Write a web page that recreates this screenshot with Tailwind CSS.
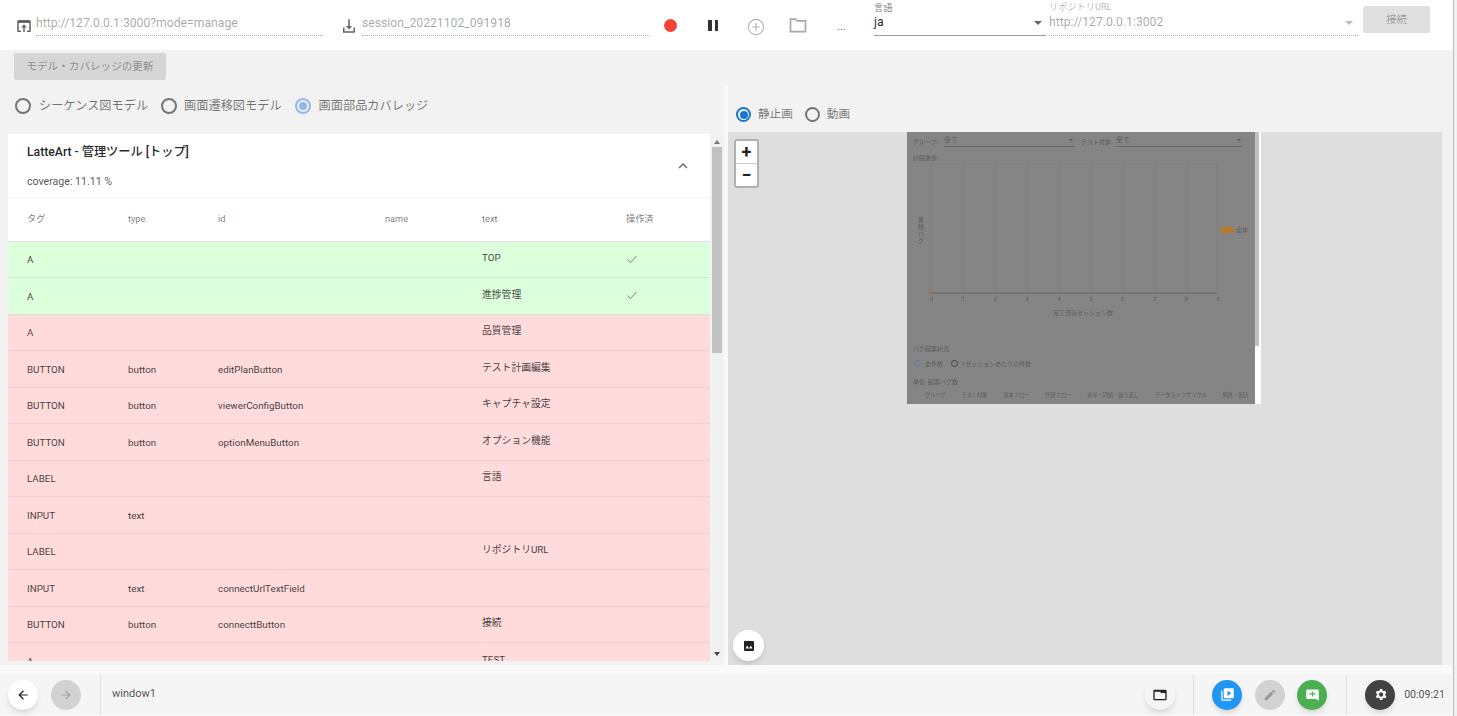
<!DOCTYPE html>
<html lang="ja">
<head>
  <meta charset="UTF-8">
  <title>LatteArt</title>
  <script src="https://cdn.jsdelivr.net/npm/@tailwindcss/browser@4"></script>
</head>
<body class="h-[716px] w-[1457px] overflow-hidden bg-[#f0f0f0] font-['Roboto','Noto_Sans_CJK_JP',sans-serif] text-[#000000de]">
  <div class="flex h-[716px] w-[1454px] flex-col border-r border-[#bdbdbd] bg-[#f2f2f2]">

    <!-- top toolbar -->
    <header class="flex h-[50px] shrink-0 items-start bg-white">
      <svg class="mt-[17px] ml-[15px] h-[18px] w-[18px] shrink-0" viewBox="0 0 24 24" fill="#666"><path d="M19 4H5a2 2 0 0 0-2 2v14h5v-2H5V8h14v10h-3v2h5V6a2 2 0 0 0-2-2zM12 10l-4 4h3v6h2v-6h3z"/></svg>
      <div class="mt-[14px] ml-[3px] h-[22px] w-[287px] border-b border-dotted border-[#aaa] pt-px text-[12.2px] leading-[17px] text-[#0000005c]">http://127.0.0.1:3000?mode=manage</div>
      <svg class="mt-[17px] ml-[17px] h-[18px] w-[18px] shrink-0" viewBox="0 0 24 24" fill="#666"><path d="M13 3h-2v9H8l4 4.500L16 12h-3zM4 14v7h16v-7h-2v5H6v-5z"/></svg>
      <div class="mt-[14px] ml-[4px] h-[22px] w-[288px] border-b border-dotted border-[#aaa] pt-px text-[12.2px] leading-[17px] text-[#0000005c]">session_20221102_091918</div>
      <div class="mt-[19px] ml-[14px] h-[13px] w-[13px] shrink-0 rounded-full bg-[#f44336]"></div>
      <div class="mt-[20px] ml-[31px] flex h-[11px] w-[10px] shrink-0 justify-between">
        <span class="w-[3.5px] bg-[#333]"></span><span class="w-[3.5px] bg-[#333]"></span>
      </div>
      <div class="mt-[18px] ml-[24px] h-[22px] w-[28px] shrink-0 px-[5px]">
        <svg class="h-[18px] w-[18px]" viewBox="0 0 18 18" fill="none" stroke="#b5b5b5" stroke-width="1.2"><circle cx="9" cy="9" r="7.6"/><path d="M9 5v8M5 9h8"/></svg>
      </div>
      <svg class="mt-[15px] ml-[18px] h-[20px] w-[20px] shrink-0" viewBox="0 0 24 24" fill="none" stroke="#a8a8a8" stroke-width="2"><path d="M3 20V5h6l2 2h10v13z"/></svg>
      <div class="mt-[19px] ml-[29px] w-[12px] shrink-0 text-[11px] leading-[16px] text-[#666]">...</div>
      <div class="relative ml-[25px] h-[36px] w-[172px] shrink-0 border-b border-[#9a9a9a]">
        <div class="pt-px text-[9.2px] leading-[13px] text-[#0000008a]">言語</div>
        <div class="text-[12.2px] leading-[17px]">ja</div>
        <div class="absolute top-[21px] right-[4px] h-0 w-0 border-x-[4px] border-t-[4px] border-x-transparent border-t-[#666]"></div>
      </div>
      <div class="relative ml-[3px] h-[36px] w-[309px] shrink-0 border-b border-dotted border-[#aaa]">
        <div class="text-[9.2px] leading-[13px] text-[#00000052]">リポジトリURL</div>
        <div class="pt-px text-[12.2px] leading-[17px] text-[#0000005c]">http://127.0.0.1:3002</div>
        <div class="absolute top-[21px] right-[5px] h-0 w-0 border-x-[4px] border-t-[4px] border-x-transparent border-t-[#bbb]"></div>
      </div>
      <div class="mt-[6px] ml-[5px] flex h-[27px] w-[67px] shrink-0 items-center justify-center rounded-[2px] bg-[#dfdfdf] pt-px text-[10.6px] text-[#00000052]">接続</div>
    </header>

    <!-- main -->
    <main class="flex min-h-0 flex-1">
      <section class="flex w-[724px] shrink-0 flex-col">
        <div class="mt-[3px] ml-[14px] flex h-[27px] w-[152px] items-center justify-center rounded-[2px] bg-[#d6d6d6] pt-px text-[10.6px] text-[#00000061]">モデル・カバレッジの更新</div>
        <div class="mt-[14px] ml-[15px] flex h-[24px] items-center text-[12.2px] text-[#0000008a]">
          <span class="h-[16px] w-[16px] rounded-full border-2 border-[#757575]"></span>
          <span class="ml-[8px]">シーケンス図モデル</span>
          <span class="ml-[13px] h-[16px] w-[16px] rounded-full border-2 border-[#757575]"></span>
          <span class="ml-[7px]">画面遷移図モデル</span>
          <span class="ml-[13px] flex h-[16px] w-[16px] items-center justify-center rounded-full border-2 border-[#90b8ee]"><span class="h-[8px] w-[8px] rounded-full bg-[#90b8ee]"></span></span>
          <span class="ml-[8px]">画面部品カバレッジ</span>
        </div>
        <div class="mt-[16px] flex min-h-0">
          <div class="ml-[8px] h-[527px] w-[702px] overflow-hidden bg-white">
            <div class="relative h-[64px] border-b border-[#f4f4f4]">
              <div class="pt-[10px] pl-[19px] text-[12.2px] leading-[17px] font-medium">LatteArt - 管理ツール [トップ]</div>
              <div class="pt-[14px] pl-[19px] text-[10.6px] leading-[14px] text-[#000000b3]">coverage: 11.11 %</div>
              <svg class="absolute top-[24px] right-[19px] h-[16px] w-[16px]" viewBox="0 0 24 24" fill="none" stroke="#666" stroke-width="2"><path d="M6 15l6-6 6 6"/></svg>
            </div>
            <table class="w-full table-fixed border-collapse text-[9.8px]">
              <colgroup><col class="w-[102px]"><col class="w-[90px]"><col class="w-[167px]"><col class="w-[97px]"><col class="w-[144px]"><col></colgroup>
              <thead>
                <tr class="h-[43.3px] border-b border-[#e0e0e0] text-left text-[9.2px] text-[#0000008a]">
                  <th class="pb-px pl-[19px] font-normal">タグ</th><th class="pb-px pl-[18px] font-normal">type</th><th class="pb-px pl-[18px] font-normal">id</th><th class="pb-px pl-[18px] font-normal">name</th><th class="pb-px pl-[18px] font-normal">text</th><th class="pb-px pl-[18px] font-normal">操作済</th>
                </tr>
              </thead>
              <tbody class="text-[#000000bf] [&_td]:pt-[2px]">
                <tr class="h-[36.5px] border-b border-[#cfe8cf] bg-[#dcffdc]"><td class="pl-[19px]">A</td><td></td><td></td><td></td><td class="pb-[4px] pl-[18px]">TOP</td><td class="pb-[4px] pl-[18px]"><svg class="h-[12px] w-[12px]" viewBox="0 0 24 24" fill="none" stroke="#666" stroke-width="1.6"><path d="M3 13l6 6L21 6"/></svg></td></tr>
                <tr class="h-[36.5px] border-b border-[#cfe8cf] bg-[#dcffdc]"><td class="pl-[19px]">A</td><td></td><td></td><td></td><td class="pb-[4px] pl-[18px]">進捗管理</td><td class="pb-[4px] pl-[18px]"><svg class="h-[12px] w-[12px]" viewBox="0 0 24 24" fill="none" stroke="#666" stroke-width="1.6"><path d="M3 13l6 6L21 6"/></svg></td></tr>
                <tr class="h-[36.5px] border-b border-[#f0cfcf] bg-[#ffdbdb]"><td class="pl-[19px]">A</td><td></td><td></td><td></td><td class="pb-[4px] pl-[18px]">品質管理</td><td></td></tr>
                <tr class="h-[36.5px] border-b border-[#f0cfcf] bg-[#ffdbdb]"><td class="pl-[19px]">BUTTON</td><td class="pl-[18px]">button</td><td class="pl-[18px]">editPlanButton</td><td></td><td class="pb-[4px] pl-[18px]">テスト計画編集</td><td></td></tr>
                <tr class="h-[36.5px] border-b border-[#f0cfcf] bg-[#ffdbdb]"><td class="pl-[19px]">BUTTON</td><td class="pl-[18px]">button</td><td class="pl-[18px]">viewerConfigButton</td><td></td><td class="pb-[4px] pl-[18px]">キャプチャ設定</td><td></td></tr>
                <tr class="h-[36.5px] border-b border-[#f0cfcf] bg-[#ffdbdb]"><td class="pl-[19px]">BUTTON</td><td class="pl-[18px]">button</td><td class="pl-[18px]">optionMenuButton</td><td></td><td class="pb-[4px] pl-[18px]">オプション機能</td><td></td></tr>
                <tr class="h-[36.5px] border-b border-[#f0cfcf] bg-[#ffdbdb]"><td class="pl-[19px]">LABEL</td><td></td><td></td><td></td><td class="pb-[4px] pl-[18px]">言語</td><td></td></tr>
                <tr class="h-[36.5px] border-b border-[#f0cfcf] bg-[#ffdbdb]"><td class="pl-[19px]">INPUT</td><td class="pl-[18px]">text</td><td></td><td></td><td></td><td></td></tr>
                <tr class="h-[36.5px] border-b border-[#f0cfcf] bg-[#ffdbdb]"><td class="pl-[19px]">LABEL</td><td></td><td></td><td></td><td class="pb-[4px] pl-[18px]">リポジトリURL</td><td></td></tr>
                <tr class="h-[36.5px] border-b border-[#f0cfcf] bg-[#ffdbdb]"><td class="pl-[19px]">INPUT</td><td class="pl-[18px]">text</td><td class="pl-[18px]">connectUrlTextField</td><td></td><td></td><td></td></tr>
                <tr class="h-[36.5px] border-b border-[#f0cfcf] bg-[#ffdbdb]"><td class="pl-[19px]">BUTTON</td><td class="pl-[18px]">button</td><td class="pl-[18px]">connecttButton</td><td></td><td class="pb-[4px] pl-[18px]">接続</td><td></td></tr>
                <tr class="h-[36.5px] bg-[#ffdbdb]"><td class="pl-[19px]">A</td><td></td><td></td><td></td><td class="pb-[4px] pl-[18px]">TEST</td><td></td></tr>
              </tbody>
            </table>
          </div>
          <!-- list scrollbar -->
          <div class="ml-[2px] flex h-[527px] w-[10px] flex-col items-center bg-[#f1f1f1]">
            <div class="mt-[6px] h-0 w-0 border-x-[3px] border-b-[4px] border-x-transparent border-b-[#777]"></div>
            <div class="mt-[3px] h-[206px] w-[10px] bg-[#c1c1c1]"></div>
            <div class="mt-auto mb-[5px] h-0 w-0 border-x-[3px] border-t-[4px] border-x-transparent border-t-[#444]"></div>
          </div>
        </div>
      </section>

      <!-- screenshot pane -->
      <section class="flex min-w-0 flex-1 flex-col">
        <div class="h-[35px] shrink-0"></div>
        <div class="flex min-h-0 flex-1 flex-col border-l-4 border-[#f8f8f8]">
          <div class="flex h-[47px] shrink-0 items-end pb-[10px] pl-[8px] text-[11.6px] text-[#0000008a]">
            <span class="flex h-[15px] w-[15px] items-center justify-center rounded-full border-2 border-[#1976d2]"><span class="h-[8px] w-[8px] rounded-full bg-[#1976d2]"></span></span>
            <span class="ml-[7px] leading-[15px]">静止画</span>
            <span class="ml-[12px] h-[15px] w-[15px] rounded-full border-2 border-[#757575]"></span>
            <span class="ml-[7px] leading-[15px]">動画</span>
          </div>
          <div class="relative mr-[11px] h-[533px] bg-[#dedede]">
            <!-- dimmed capture -->
            <div class="absolute top-0 left-[179px] h-[272px] w-[348px] overflow-hidden bg-[#858585] text-[#5a5a5a] blur-[0.6px]">
              <div class="absolute top-[5px] left-[6px] text-[6px]">グループ:</div>
              <div class="absolute top-[3px] left-[37px] h-[12px] w-[131px] border-b border-[#666] text-[7px]">全て</div>
              <div class="absolute top-[7px] left-[162px] h-0 w-0 border-x-[2px] border-t-[2px] border-x-transparent border-t-[#555]"></div>
              <div class="absolute top-[5px] left-[174px] text-[6px]">テスト対象:</div>
              <div class="absolute top-[3px] left-[209px] h-[12px] w-[126px] border-b border-[#666] text-[7px]">全て</div>
              <div class="absolute top-[7px] left-[330px] h-0 w-0 border-x-[2px] border-t-[2px] border-x-transparent border-t-[#555]"></div>
              <div class="absolute top-[21px] left-[6px] text-[6px]">計画進捗</div>
              <svg class="absolute top-[30px] left-0" width="348" height="170" fill="none">
                <path d="M24 2V131M56 2V131M88 2V131M120 2V131M152 2V131M184 2V131M216 2V131M248 2V131M280 2V131M310 2V131M24 2H310" stroke="#7d7d7d" stroke-width="0.6"/>
                <path d="M22 131H310" stroke="#666" stroke-width="1"/>
                <circle cx="24" cy="131" r="1.5" fill="#a07030"/>
              </svg>
              <div class="absolute top-[84px] left-[11px] w-[6px] text-center text-[6px] leading-[7px]">累積バグ</div>
              <div class="absolute top-[162px] left-[23px] flex w-[290px] justify-between text-[6px]"><span>0</span><span>1</span><span>2</span><span>3</span><span>4</span><span>5</span><span>6</span><span>7</span><span>8</span><span>9</span></div>
              <div class="absolute top-[176px] left-[146px] text-[6px]">完了済みセッション数</div>
              <div class="absolute top-[95px] left-[314px] h-[6px] w-[13px] bg-[#b87a2a]"></div>
              <div class="absolute top-[93px] left-[329px] text-[6px]">全体</div>
              <div class="absolute top-[212px] left-[6px] text-[6px]">バグ起票状況</div>
              <div class="absolute top-[228px] left-[7px] h-[7px] w-[7px] rounded-full border border-[#5f79a3]"></div>
              <div class="absolute top-[227px] left-[18px] text-[6px]">全件数</div>
              <div class="absolute top-[228px] left-[44px] h-[7px] w-[7px] rounded-full border border-[#444]"></div>
              <div class="absolute top-[227px] left-[55px] text-[6px]">1セッションあたりの件数</div>
              <div class="absolute top-[245px] left-[6px] text-[6px]">単位: 起票バグ数</div>
              <div class="absolute top-[260px] left-[18px] flex gap-[16px] text-[5.2px] whitespace-nowrap"><span>グループ</span><span>テスト対象</span><span>基本フロー</span><span>代替フロー</span><span>水平・同値・繰り返し</span><span>データライフサイクル</span><span>例外・割込</span></div>
            </div>
            <div class="absolute top-0 left-[527px] h-[272px] w-[6px] bg-white">
              <div class="h-[214px] w-[4px] bg-[#c1c1c1]"></div>
            </div>
            <!-- zoom control -->
            <div class="absolute top-[7px] left-[6px] flex h-[49px] w-[25px] flex-col rounded-[3px] border-2 border-[#b0b0b0] bg-white">
              <div class="flex flex-1 items-center justify-center border-b border-[#ccc] text-[18px] leading-none font-bold text-[#222]">+</div>
              <div class="flex flex-1 items-center justify-center text-[18px] leading-none font-bold text-[#222]">−</div>
            </div>
            <div class="absolute bottom-[4px] left-[5px] flex h-[31px] w-[31px] items-center justify-center rounded-full bg-white shadow-md">
              <svg class="h-[12px] w-[12px]" viewBox="0 0 12 12"><rect x="1" y="1" width="10" height="10" rx="1" fill="#222"/><path d="M2.500 8.500L4.250 5.500 6 8.500 7.750 5.500 9.500 8.500z" fill="#fff"/></svg>
            </div>
          </div>
        </div>
      </section>
    </main>

    <!-- footer -->
    <footer class="flex h-[51px] shrink-0 flex-col bg-[#fafafa]">
      <div class="mt-[9px] flex h-[41px] items-center bg-[#f5f5f5] pr-[8px]">
        <div class="ml-[8px] flex h-[30px] w-[30px] items-center justify-center rounded-full bg-white shadow-md">
          <svg class="h-[14px] w-[14px]" viewBox="0 0 24 24" fill="#222"><path d="M20 11H8l5.500-5.500L12 4l-8 8 8 8 1.500-1.500L8 13h12z"/></svg>
        </div>
        <div class="ml-[13px] flex h-[30px] w-[30px] items-center justify-center rounded-full bg-[#d2d2d2]">
          <svg class="h-[14px] w-[14px]" viewBox="0 0 24 24" fill="#a5a5a5"><path d="M4 11h12l-5.500-5.500L12 4l8 8-8 8-1.500-1.500L16 13H4z"/></svg>
        </div>
        <div class="ml-[19px] h-full w-px bg-[#e0e0e0]"></div>
        <div class="ml-[11px] text-[11px] text-[#000000b3]">window1</div>
        <div class="ml-auto flex h-[30px] w-[30px] items-center justify-center rounded-full bg-[#f5f5f5] shadow-md">
          <svg class="h-[16px] w-[16px]" viewBox="0 0 24 24" fill="#222"><path fill-rule="evenodd" d="M4 4h16a2 2 0 0 1 2 2v12a2 2 0 0 1-2 2H4a2 2 0 0 1-2-2V6a2 2 0 0 1 2-2zm0 6v8h16V9h-7V7H4z"/></svg>
        </div>
        <div class="ml-[18px] h-full w-px bg-[#e0e0e0]"></div>
        <div class="ml-[18px] flex h-[30px] w-[30px] items-center justify-center rounded-full bg-[#2196f3] shadow-md">
          <svg class="h-[15px] w-[15px]" viewBox="0 0 24 24" fill="#fff"><path d="M4 6H2v14a2 2 0 0 0 2 2h14v-2H4zm16-4H8a2 2 0 0 0-2 2v12a2 2 0 0 0 2 2h12a2 2 0 0 0 2-2V4a2 2 0 0 0-2-2zm-8 12.500v-9l6 4.500z"/></svg>
        </div>
        <div class="ml-[13px] flex h-[30px] w-[30px] items-center justify-center rounded-full bg-[#d2d2d2]">
          <svg class="h-[14px] w-[14px]" viewBox="0 0 24 24" fill="#9a9a9a"><path d="M3 17.250V21h3.750L17.800 9.940l-3.750-3.750zM20.700 7.040a1 1 0 0 0 0-1.410l-2.340-2.340a1 1 0 0 0-1.410 0l-1.830 1.830 3.750 3.750z"/></svg>
        </div>
        <div class="ml-[12px] flex h-[30px] w-[30px] items-center justify-center rounded-full bg-[#4caf50] shadow-md">
          <svg class="h-[15px] w-[15px]" viewBox="0 0 24 24" fill="#fff"><path d="M20 4H4a2 2 0 0 0-2 2v11a2 2 0 0 0 2 2h14l4 3V6a2 2 0 0 0-2-2zm-3 8h-4v3h-2v-3H7v-2h4V7h2v3h4z"/></svg>
        </div>
        <div class="ml-[19px] h-full w-px bg-[#e0e0e0]"></div>
        <div class="ml-[18px] flex h-[30px] w-[30px] items-center justify-center rounded-full bg-[#424242] shadow-md">
          <svg class="h-[15px] w-[15px]" viewBox="0 0 24 24" fill="#fff"><path d="M19.400 13a7.500 7.500 0 0 0 0-2l2.100-1.600-2-3.500-2.500 1a7.500 7.500 0 0 0-1.700-1L15 3.200h-4l-.4 2.700a7.500 7.500 0 0 0-1.700 1l-2.500-1-2 3.500L6.500 11a7.500 7.500 0 0 0 0 2l-2.100 1.600 2 3.500 2.500-1a7.500 7.500 0 0 0 1.700 1l.4 2.700h4l.4-2.700a7.500 7.500 0 0 0 1.700-1l2.500 1 2-3.500zM13 15.500a3.500 3.500 0 1 1 0-7 3.500 3.500 0 0 1 0 7z"/></svg>
        </div>
        <div class="ml-[9px] text-[10.6px] text-[#000000b3]">00:09:21</div>
      </div>
    </footer>
  </div>
</body>
</html>
